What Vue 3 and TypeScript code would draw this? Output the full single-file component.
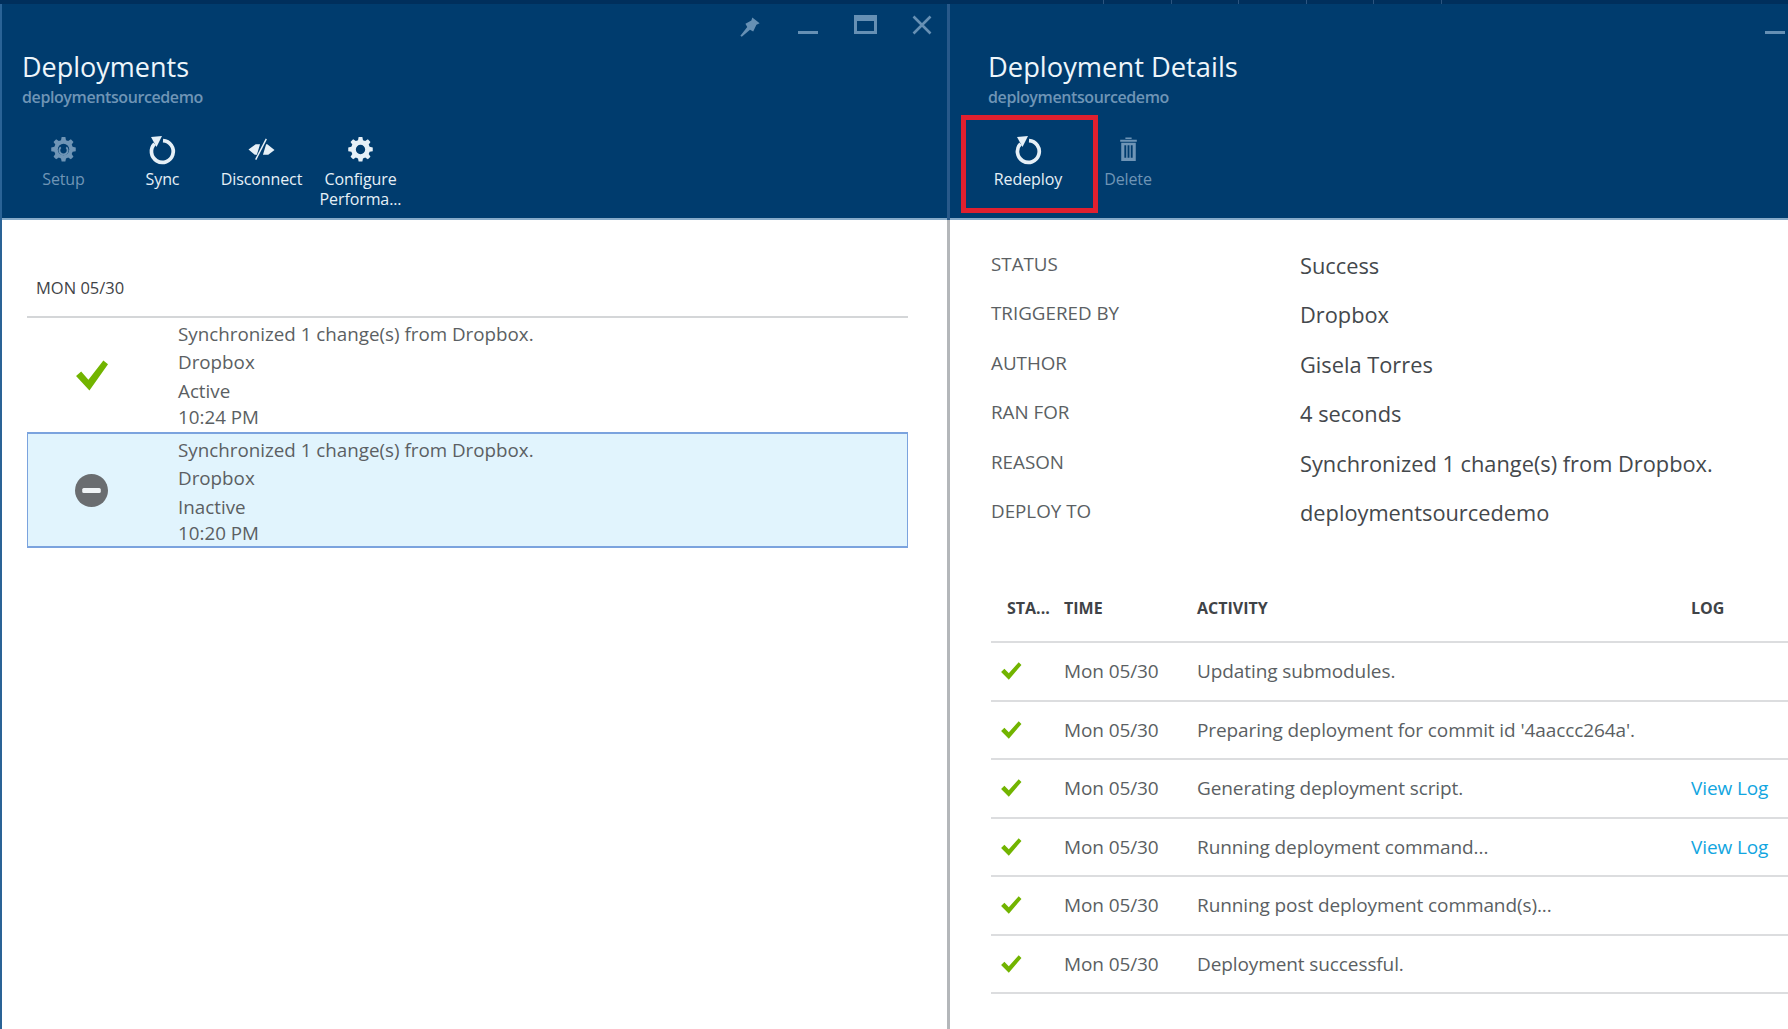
<script setup lang="ts">
interface Deployment { message: string; source: string; state: string; time: string; ok: boolean; selected: boolean }
const deployments: Deployment[] = [
  { message: 'Synchronized 1 change(s) from Dropbox.', source: 'Dropbox', state: 'Active', time: '10:24 PM', ok: true, selected: false },
  { message: 'Synchronized 1 change(s) from Dropbox.', source: 'Dropbox', state: 'Inactive', time: '10:20 PM', ok: false, selected: true },
]
const details: [string, string][] = [
  ['STATUS', 'Success'],
  ['TRIGGERED BY', 'Dropbox'],
  ['AUTHOR', 'Gisela Torres'],
  ['RAN FOR', '4 seconds'],
  ['REASON', 'Synchronized 1 change(s) from Dropbox.'],
  ['DEPLOY TO', 'deploymentsourcedemo'],
]
const activity: { text: string; log: boolean }[] = [
  { text: 'Updating submodules.', log: false },
  { text: "Preparing deployment for commit id '4aaccc264a'.", log: false },
  { text: 'Generating deployment script.', log: true },
  { text: 'Running deployment command...', log: true },
  { text: 'Running post deployment command(s)...', log: false },
  { text: 'Deployment successful.', log: false },
]
const gearPath = 'M10.2 1h3.6l.6 3 2.1.9 2.6-1.7 2.5 2.5-1.7 2.6.9 2.1 3 .6v3.6l-3 .6-.9 2.1 1.7 2.6-2.5 2.5-2.6-1.7-2.1.9-.6 3h-3.6l-.6-3-2.1-.9-2.6 1.7-2.5-2.5 1.7-2.6-.9-2.1-3-.6v-3.6l3-.6.9-2.1-1.7-2.6 2.5-2.5 2.6 1.7 2.1-.9z'
</script>

<template>
  <div class="page">
    <div class="topbar"><i v-for="n in 6" :key="n" class="tick"></i></div>
    <div class="blades">
      <section class="blade left">
        <header class="head">
          <div class="winctl">
            <svg class="ctl pin" viewBox="0 0 24 24"><path d="M14.500 1.500L22.500 8 19 9.500 15.500 17 12 15 3 22.500 1.500 21.500 9 12 7 8.500 13.500 5z" /></svg>
            <span class="ctl-min"></span>
            <span class="ctl-max"></span>
            <svg class="ctl close" viewBox="0 0 20 20"><path d="M1.500 1.500l17 17M18.500 1.500l-17 17" /></svg>
          </div>
          <h1>Deployments</h1>
          <p class="sub">deploymentsourcedemo</p>
          <div class="tools">
            <div class="tool dim">
              <svg viewBox="-1 0 26 26" class="ic"><path :d="gearPath" fill="currentColor" /><circle cx="12" cy="13" r="5.500" fill="#003c6e" /><path d="M9.300 10.800a4 4 0 1 0 5.400 0" fill="none" stroke="currentColor" stroke-width="1.800" /></svg>
              <span>Setup</span>
            </div>
            <div class="tool">
              <svg viewBox="0 0 27 27" class="ic sync"><path d="M14 4.600a10.900 10.900 0 1 1-8.400 3.200" fill="none" stroke="currentColor" stroke-width="3.700" /><path d="M2 1L13 0 7.500 11z" fill="currentColor" /></svg>
              <span>Sync</span>
            </div>
            <div class="tool">
              <svg viewBox="0 0 28 26" class="ic"><path d="M0.500 13l7.500-5.500h4.500l-3.300 11H7zM27.500 13.500L21 18.500h-5.500l3.300-11H20z" fill="currentColor" /><path d="M8 23.500L19 2" stroke="currentColor" stroke-width="1.500" fill="none" /></svg>
              <span>Disconnect</span>
            </div>
            <div class="tool">
              <svg viewBox="-1 0 26 26" class="ic"><path fill-rule="evenodd" :d="gearPath + 'M12 8.500a4.500 4.500 0 1 0 0 9 4.500 4.500 0 0 0 0-9z'" fill="currentColor" /></svg>
              <span>Configure<br />Performa...</span>
            </div>
          </div>
        </header>
        <div class="list">
          <div class="group">MON 05/30</div>
          <div v-for="d in deployments" :key="d.time" class="row" :class="{ selected: d.selected }">
            <div class="state">
              <svg v-if="d.ok" viewBox="0 0 32 30" class="bigcheck"><path d="M1 15.500l5-4.500 7 8L27.500 0.500 32 4 14 29.500z" /></svg>
              <svg v-else viewBox="0 0 32 32" class="minus"><circle cx="16" cy="16" r="16" /><rect x="7" y="13.500" width="18" height="5" rx="1.500" /></svg>
            </div>
            <div class="lines">
              <div>{{ d.message }}</div>
              <div>{{ d.source }}</div>
              <div>{{ d.state }}</div>
              <div class="last">{{ d.time }}</div>
            </div>
          </div>
        </div>
      </section>

      <section class="blade right">
        <header class="head">
          <span class="rmin"></span>
          <h1 class="wide">Deployment Details</h1>
          <p class="sub">deploymentsourcedemo</p>
          <div class="tools rtools">
            <div class="tool outlined">
              <svg viewBox="0 0 27 27" class="ic sync"><path d="M14 4.600a10.900 10.900 0 1 1-8.400 3.200" fill="none" stroke="currentColor" stroke-width="3.700" /><path d="M2 1L13 0 7.500 11z" fill="currentColor" /></svg>
              <span>Redeploy</span>
            </div>
            <div class="tool dim">
              <svg viewBox="0 0 26 26" class="ic"><path d="M5 3.500h16v2H5zM10 1.500h6v1.500h-6z" fill="currentColor" /><path fill-rule="evenodd" d="M6 6.500h14V24H6zM9 9v12h1.800V9zM12.100 9v12h1.800V9zM15.200 9v12H17V9z" fill="currentColor" /></svg>
              <span>Delete</span>
            </div>
          </div>
        </header>
        <div class="detail">
          <dl class="facts">
            <template v-for="f in details" :key="f[0]">
              <dt>{{ f[0] }}</dt>
              <dd>{{ f[1] }}</dd>
            </template>
          </dl>
          <div class="table">
            <div class="tr th">
              <div class="c-status">STA...</div>
              <div>TIME</div>
              <div>ACTIVITY</div>
              <div>LOG</div>
            </div>
            <div v-for="a in activity" :key="a.text" class="tr">
              <div class="c-icon"><svg viewBox="0 0 20 18" class="check"><path d="M1 10l3-3 4 4L17 1l2.500 2.500L8 17z" /></svg></div>
              <div>Mon 05/30</div>
              <div>{{ a.text }}</div>
              <div class="log"><template v-if="a.log">View Log</template></div>
            </div>
          </div>
        </div>
      </section>
    </div>
  </div>
</template>

<style>
html, body { margin: 0; padding: 0; overflow: hidden; background: #fff; }
</style>

<style scoped>
.page {
  width: 1788px;
  height: 1029px;
  display: flex;
  flex-direction: column;
  overflow: hidden;
  font-family: "Open Sans", "Noto Sans", sans-serif;
  color: #5b5f63;
  background: #fff;
}
.topbar {
  height: 4px;
  flex: none;
  background: #002f5c;
  display: flex;
  gap: 66.600px;
  padding-left: 1103px;
}
.tick { width: 1px; height: 4px; background: #2c5580; }
.blades { flex: 1; display: flex; min-height: 0; }
.blade { display: flex; flex-direction: column; min-width: 0; }
.left { width: 947px; flex: none; border-left: 2px solid #2a6396; box-sizing: border-box; }
.right { flex: 1; border-left: 3px solid #b4b7ba; }
.head {
  position: relative;
  height: 216px;
  flex: none;
  box-sizing: border-box;
  background: #003c6e;
  border-bottom: 2px solid #86aac8;
  padding: 45px 0 0 20px;
  color: #fff;
}
.right .head { padding-left: 38px; }
.right .head::before {
  content: "";
  position: absolute;
  left: -3px;
  top: 0;
  bottom: -2px;
  width: 3px;
  background: #28598a;
}
h1 {
  margin: 0;
  font-size: 27px;
  font-weight: 400;
  line-height: 36px;
  color: #eef6fb;
}
h1.wide { font-size: 27.300px; }
.sub {
  margin: 1px 0 0;
  font-size: 16px;
  line-height: 22px;
  font-weight: 600;
  color: #6f95b6;
  letter-spacing: -0.4px;
}
.tools { display: flex; margin: 28px 0 0 -8px; }
.rtools { margin-left: -27px; margin-top: 7px; }
.tool {
  width: 99px;
  display: flex;
  flex-direction: column;
  align-items: center;
  text-align: center;
  font-size: 16px;
  line-height: 20px;
  letter-spacing: -0.1px;
  color: #e6f0f7;
}
.tool span { margin-top: 6px; }
.tool.dim { color: #6f95b6; }
.ic { width: 27px; height: 27px; display: block; }
.sync { overflow: visible; }
.outlined {
  width: 137px;
  height: 98px;
  box-sizing: border-box;
  border: 5px solid #e0202f;
  padding: 16px 3px 0 0;
}
.outlined + .tool { width: 60px; padding-top: 21px; }
.winctl {
  position: absolute;
  top: 0;
  left: 737px;
  display: flex;
  align-items: flex-start;
}
.ctl { display: block; }
.pin { width: 22px; height: 22px; fill: #6690b4; margin: 12px 37px 0 0; }
.ctl-min { width: 20px; height: 3px; background: #6690b4; margin: 27px 36px 0 0; }
.ctl-max { width: 23px; height: 19px; box-sizing: border-box; border: 3px solid #6690b4; border-top-width: 6px; margin: 11px 35px 0 0; }
.close { width: 20px; height: 20px; margin-top: 11px; fill: none; stroke: #6690b4; stroke-width: 2.600; }
.rmin { position: absolute; right: 3px; top: 27px; width: 20px; height: 3px; background: #6690b4; }

.list { padding: 55px 0 0 25px; }
.group {
  width: 881px;
  height: 43px;
  box-sizing: border-box;
  padding-left: 9px;
  font-size: 16.500px;
  line-height: 25px;
  font-weight: 500;
  color: #3f4347;
  border-bottom: 2px solid #d4d6d8;
}
.row {
  width: 881px;
  height: 115px;
  box-sizing: border-box;
  display: flex;
  border: 1px solid transparent;
  border-width: 2px 1px;
}
.row:not(.selected) { margin-bottom: -1px; }
.row.selected { height: 116px; background: #e1f4fd; border-color: #7ba3de; }
.state { width: 150px; flex: none; display: flex; justify-content: center; align-items: center; padding-right: 24px; box-sizing: border-box; }
.bigcheck { width: 33px; height: 31px; fill: #72b400; }
.minus { width: 33px; height: 33px; fill: #6a6d70; }
.minus rect { fill: #f0f4f6; }
.lines { font-size: 18.800px; line-height: 28.300px; }
.selected .lines { padding-top: 2px; }
.last { margin-top: -2px; }

.detail { padding: 0 0 0 41px; }
.facts {
  margin: 19px 0 0;
  display: grid;
  grid-template-columns: 309px 1fr;
  grid-auto-rows: 49.500px;
  align-items: center;
}
dt { font-size: 18.800px; color: #5b5f63; }
dd { margin: 0; font-size: 21.800px; color: #44484c; padding-top: 3px; }
.table { margin-top: 43px; }
.tr {
  display: grid;
  grid-template-columns: 73px 133px 494px 1fr;
  height: 58.500px;
  box-sizing: border-box;
  align-items: center;
  border-bottom: 2px solid #dcdddf;
  font-size: 19px;
  letter-spacing: -0.1px;
}
.th { height: 64px; font-size: 16px; font-weight: 700; color: #3f4347; padding-bottom: 4px; letter-spacing: 0; }
.c-status { padding-left: 16px; }
.c-icon { padding-left: 9px; }
.check { width: 22px; height: 20px; fill: #72b400; display: block; }
.log { color: #12a5e0; }
</style>
